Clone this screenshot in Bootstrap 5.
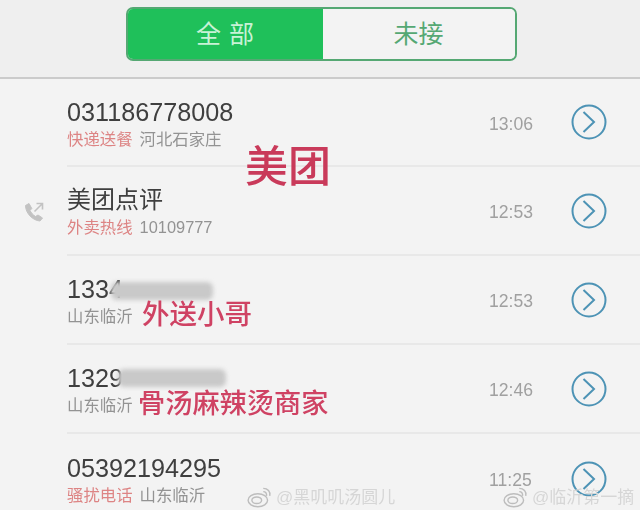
<!DOCTYPE html>
<html lang="zh-CN">
<head>
    <meta charset="UTF-8">
    <meta name="viewport" content="width=device-width, initial-scale=1.0">
    <title>Call Log</title>
    <link href="https://cdn.jsdelivr.net/npm/bootstrap@5.3.0/dist/css/bootstrap.min.css" rel="stylesheet">
    <style>
        html, body { width: 640px; height: 510px; overflow: hidden; background: #f3f3f3; }
        body { font-family: "Liberation Sans", "Noto Sans CJK SC", sans-serif; }
        .screen { position: relative; width: 640px; height: 510px; filter: blur(.5px); }
        .top-bar { height: 79px; background: #efefef; border-bottom: 2px solid #cbcbcb; padding-top: 7px; padding-left: 2px; }
        .seg-group { width: 391px; height: 54px; border: 2px solid #55a873; border-radius: 7px; overflow: hidden; }
        .seg-item { font-size: 25px; line-height: 1; }
        .seg-on { width: 195px; background: #1fc05a; color: #c8f2d6; letter-spacing: 8px; padding-left: 8px; }
        .seg-off { background: #f3f3f3; color: #55a873; }
        .call-row { position: relative; height: 89px; }
        .call-gutter { width: 67px; }
        .call-body { border-bottom: 2px solid #e8e8e8; min-width: 0; }
        .call-text { padding-top: 3px; }
        .call-name { font-size: 25.2px; line-height: 28px; color: #3f3f3f; }
        .call-name-cjk { font-size: 24px; }
        .call-sub { display: flex; gap: 7px; font-size: 16.4px; line-height: 22px; color: #939393; margin-top: 2px; }
        .call-tag { color: #dd8484; }
        .call-time { width: 82px; font-size: 17.6px; color: #a0a0a0; padding-top: 4px; }
        .call-go { width: 36px; height: 36px; margin-right: 33px; }
        .row-first { height: 88px; }
        .note-text { position: absolute; color: #cf4263; font-weight: 500; white-space: nowrap; line-height: 1; }
        .note-mt { left: 245px; top: 67px; font-size: 43px; color: #c93a5a; }
        .note-ws { left: 142px; top: 45px; font-size: 27.5px; }
        .note-gt { left: 138px; top: 45px; font-size: 27.2px; }
        .smudge { position: absolute; height: 18px; background: #c9c9c9; filter: blur(2px); border-radius: 6px; }
        .smudge-a { left: 111px; top: 26px; width: 102px; }
        .smudge-b { left: 118px; top: 24px; width: 108px; }
        .mark-text { position: absolute; bottom: 2px; display: flex; align-items: center; gap: 3px; font-size: 17px; color: #d6d6d6; white-space: nowrap; line-height: 1; filter: blur(.7px); }
        .mark-a { left: 247px; }
        .mark-b { left: 503px; }
    </style>
</head>
<body>
<div class="screen">
    <div class="top-bar d-flex justify-content-center">
        <div class="seg-group d-flex">
            <div class="seg-item seg-on d-flex align-items-center justify-content-center">全部</div>
            <div class="seg-item seg-off flex-grow-1 d-flex align-items-center justify-content-center">未接</div>
        </div>
    </div>

    <div class="call-row row-first d-flex">
        <div class="call-gutter"></div>
        <div class="call-body flex-grow-1 d-flex align-items-center">
            <div class="call-text flex-grow-1">
                <div class="call-name">031186778008</div>
                <div class="call-sub"><span class="call-tag">快递送餐</span><span>河北石家庄</span></div>
            </div>
            <div class="call-time">13:06</div>
            <svg class="call-go" viewBox="0 0 36 36" fill="none" stroke="#4d93b5" stroke-width="2"><circle cx="18" cy="18" r="16.500"/><path d="M12.500 8 23 18 12.500 28"/></svg>
        </div>
        <div class="note-text note-mt">美团</div>
    </div>

    <div class="call-row d-flex">
        <div class="call-gutter d-flex justify-content-center align-items-center">
            <svg width="22" height="22" viewBox="0 0 22 22" fill="none" stroke="#c2c2c2" stroke-width="1.600"><path d="M2.500 4.500C2.500 12 9.500 19.500 17 20l2.500-3-4.500-3-2.500 1.500C10 14 8 11.500 7 9.500L8.800 7.500 6 2.500Z" fill="#c2c2c2" stroke-width="1"/><path d="M11.500 10.500 19.500 2.500M13.500 2.500h6v6"/></svg>
        </div>
        <div class="call-body flex-grow-1 d-flex align-items-center">
            <div class="call-text flex-grow-1">
                <div class="call-name call-name-cjk">美团点评</div>
                <div class="call-sub"><span class="call-tag">外卖热线</span><span>10109777</span></div>
            </div>
            <div class="call-time">12:53</div>
            <svg class="call-go" viewBox="0 0 36 36" fill="none" stroke="#4d93b5" stroke-width="2"><circle cx="18" cy="18" r="16.500"/><path d="M12.500 8 23 18 12.500 28"/></svg>
        </div>
    </div>

    <div class="call-row d-flex">
        <div class="call-gutter"></div>
        <div class="call-body flex-grow-1 d-flex align-items-center">
            <div class="call-text flex-grow-1">
                <div class="call-name">1334</div>
                <div class="call-sub"><span>山东临沂</span></div>
            </div>
            <div class="call-time">12:53</div>
            <svg class="call-go" viewBox="0 0 36 36" fill="none" stroke="#4d93b5" stroke-width="2"><circle cx="18" cy="18" r="16.500"/><path d="M12.500 8 23 18 12.500 28"/></svg>
        </div>
        <div class="smudge smudge-a"></div>
        <div class="note-text note-ws">外送小哥</div>
    </div>

    <div class="call-row d-flex">
        <div class="call-gutter"></div>
        <div class="call-body flex-grow-1 d-flex align-items-center">
            <div class="call-text flex-grow-1">
                <div class="call-name">1329</div>
                <div class="call-sub"><span>山东临沂</span></div>
            </div>
            <div class="call-time">12:46</div>
            <svg class="call-go" viewBox="0 0 36 36" fill="none" stroke="#4d93b5" stroke-width="2"><circle cx="18" cy="18" r="16.500"/><path d="M12.500 8 23 18 12.500 28"/></svg>
        </div>
        <div class="smudge smudge-b"></div>
        <div class="note-text note-gt">骨汤麻辣烫商家</div>
    </div>

    <div class="call-row d-flex">
        <div class="call-gutter"></div>
        <div class="flex-grow-1 d-flex align-items-center">
            <div class="call-text flex-grow-1">
                <div class="call-name">05392194295</div>
                <div class="call-sub"><span class="call-tag">骚扰电话</span><span>山东临沂</span></div>
            </div>
            <div class="call-time">11:25</div>
            <svg class="call-go" viewBox="0 0 36 36" fill="none" stroke="#4d93b5" stroke-width="2"><circle cx="18" cy="18" r="16.500"/><path d="M12.500 8 23 18 12.500 28"/></svg>
        </div>
    </div>

    <div class="mark-text mark-a">
        <svg width="26" height="22" viewBox="0 0 24 20" fill="none" stroke="#bdbdbd" stroke-width="1.300"><ellipse cx="10" cy="13" rx="9" ry="6"/><ellipse cx="9" cy="13" rx="4.500" ry="3"/><path d="M15 2c4 0 7 3 6 7M15 5c2 0 3.500 1.500 3 4"/></svg>
        <span>@黑叽叽汤圆儿</span>
    </div>
    <div class="mark-text mark-b">
        <svg width="26" height="22" viewBox="0 0 24 20" fill="none" stroke="#bdbdbd" stroke-width="1.300"><ellipse cx="10" cy="13" rx="9" ry="6"/><ellipse cx="9" cy="13" rx="4.500" ry="3"/><path d="M15 2c4 0 7 3 6 7M15 5c2 0 3.500 1.500 3 4"/></svg>
        <span>@临沂第一摘</span>
    </div>
</div>
<script src="https://cdn.jsdelivr.net/npm/bootstrap@5.3.0/dist/js/bootstrap.bundle.min.js"></script>
</body>
</html>
